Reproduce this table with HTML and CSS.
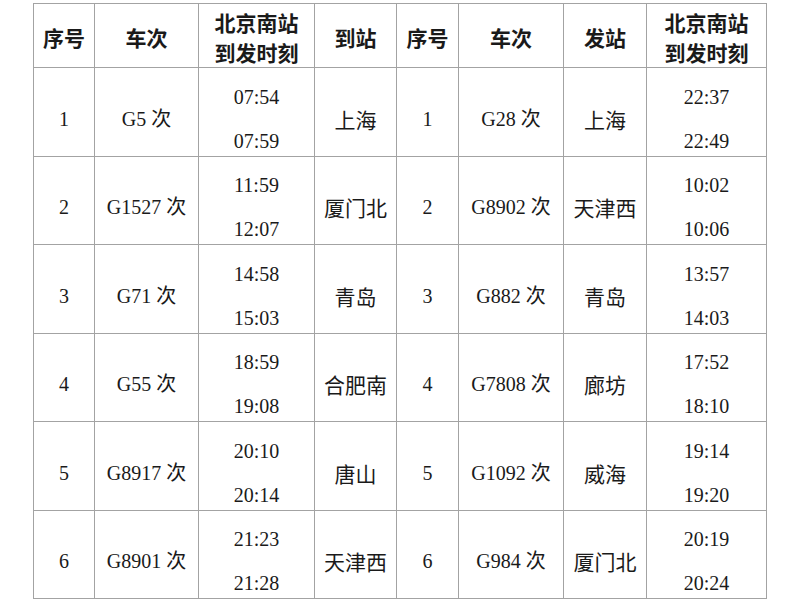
FILE: index.html
```html
<!DOCTYPE html>
<html lang="zh-CN">
<head>
<meta charset="utf-8">
<title>北京南站到发时刻</title>
<link rel="stylesheet" href="styles.css">
</head>
<body>
<div class="page">
<table class="sched">
<colgroup>
<col class="c1"><col class="c2"><col class="c3"><col class="c4">
<col class="c5"><col class="c6"><col class="c7"><col class="c8">
</colgroup>
<thead>
<tr>
<th>序号</th><th>车次</th><th>北京南站<br>到发时刻</th><th>到站</th>
<th>序号</th><th>车次</th><th>发站</th><th>北京南站<br>到发时刻</th>
</tr>
</thead>
<tbody>
<tr>
<td>1</td><td>G5 次</td><td><div class="t"><span>07:54</span><span>07:59</span></div></td><td class="st">上海</td>
<td>1</td><td>G28 次</td><td class="st">上海</td><td><div class="t"><span>22:37</span><span>22:49</span></div></td>
</tr>
<tr>
<td>2</td><td>G1527 次</td><td><div class="t"><span>11:59</span><span>12:07</span></div></td><td class="st">厦门北</td>
<td>2</td><td>G8902 次</td><td class="st">天津西</td><td><div class="t"><span>10:02</span><span>10:06</span></div></td>
</tr>
<tr>
<td>3</td><td>G71 次</td><td><div class="t"><span>14:58</span><span>15:03</span></div></td><td class="st">青岛</td>
<td>3</td><td>G882 次</td><td class="st">青岛</td><td><div class="t"><span>13:57</span><span>14:03</span></div></td>
</tr>
<tr>
<td>4</td><td>G55 次</td><td><div class="t"><span>18:59</span><span>19:08</span></div></td><td class="st">合肥南</td>
<td>4</td><td>G7808 次</td><td class="st">廊坊</td><td><div class="t"><span>17:52</span><span>18:10</span></div></td>
</tr>
<tr>
<td>5</td><td>G8917 次</td><td><div class="t"><span>20:10</span><span>20:14</span></div></td><td class="st">唐山</td>
<td>5</td><td>G1092 次</td><td class="st">威海</td><td><div class="t"><span>19:14</span><span>19:20</span></div></td>
</tr>
<tr>
<td>6</td><td>G8901 次</td><td><div class="t"><span>21:23</span><span>21:28</span></div></td><td class="st">天津西</td>
<td>6</td><td>G984 次</td><td class="st">厦门北</td><td><div class="t"><span>20:19</span><span>20:24</span></div></td>
</tr>
</tbody>
</table>
</div>
</body>
</html>
```
FILE: styles.css
```css
html, body {
  margin: 0;
  padding: 0;
  background: #ffffff;
}
.page {
  padding: 3px 0 0 33px;
}
.sched {
  border-collapse: collapse;
  table-layout: fixed;
  width: 733px;
  color: #1a1a1a;
}
.c1 { width: 61px; }
.c2 { width: 104px; }
.c3 { width: 116px; }
.c4 { width: 82px; }
.c5 { width: 62px; }
.c6 { width: 105px; }
.c7 { width: 83px; }
.c8 { width: 120px; }
.sched th,
.sched td {
  border: 1.5px solid #a3a3a3;
  text-align: center;
  padding: 0;
  box-sizing: border-box;
}
.sched th {
  height: 63px;
  padding-top: 3px;
  font-family: "Noto Sans CJK SC", sans-serif;
  font-weight: 700;
  font-size: 21px;
  line-height: 30px;
  vertical-align: middle;
}
.sched td {
  height: 88.5px;
  padding-top: 14px;
  vertical-align: middle;
  font-family: "Liberation Serif", "Noto Sans CJK SC", serif;
  font-size: 20px;
  line-height: 22px;
}
.sched td.st {
  font-family: "Noto Sans CJK SC", sans-serif;
  font-size: 21px;
}
.t {
  display: flex;
  flex-direction: column;
  align-items: center;
  gap: 22px;
}
```
